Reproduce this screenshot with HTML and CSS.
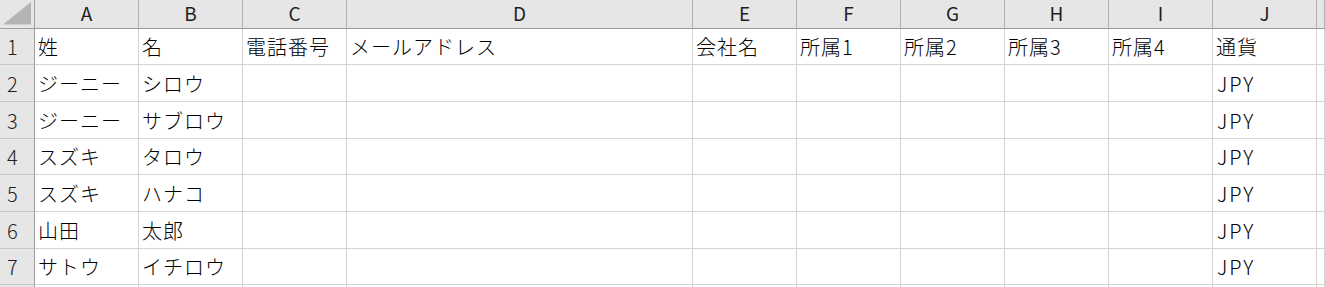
FILE: index.html
```html
<!DOCTYPE html>
<html lang="ja">
<head>
<meta charset="utf-8">
<title>Sheet</title>
<link rel="stylesheet" href="styles.css">
</head>
<body>
<div class="sheet">
  <div class="corner"><svg width="34" height="28" viewBox="0 0 34 28"><polygon points="3,24.5 31,24.5 31,2" fill="#b4b4b4"/></svg></div>
  <div class="ch">A</div><div class="ch">B</div><div class="ch">C</div><div class="ch">D</div><div class="ch">E</div><div class="ch">F</div><div class="ch">G</div><div class="ch">H</div><div class="ch">I</div><div class="ch">J</div><div class="ch"></div>

  <div class="rh">1</div><div class="c">姓</div><div class="c">名</div><div class="c">電話番号</div><div class="c">メールアドレス</div><div class="c">会社名</div><div class="c">所属1</div><div class="c">所属2</div><div class="c">所属3</div><div class="c">所属4</div><div class="c">通貨</div><div class="c"></div>

  <div class="rh">2</div><div class="c">ジーニー</div><div class="c">シロウ</div><div class="c"></div><div class="c"></div><div class="c"></div><div class="c"></div><div class="c"></div><div class="c"></div><div class="c"></div><div class="c lat">JPY</div><div class="c"></div>

  <div class="rh">3</div><div class="c">ジーニー</div><div class="c">サブロウ</div><div class="c"></div><div class="c"></div><div class="c"></div><div class="c"></div><div class="c"></div><div class="c"></div><div class="c"></div><div class="c lat">JPY</div><div class="c"></div>

  <div class="rh">4</div><div class="c">スズキ</div><div class="c">タロウ</div><div class="c"></div><div class="c"></div><div class="c"></div><div class="c"></div><div class="c"></div><div class="c"></div><div class="c"></div><div class="c lat">JPY</div><div class="c"></div>

  <div class="rh">5</div><div class="c">スズキ</div><div class="c">ハナコ</div><div class="c"></div><div class="c"></div><div class="c"></div><div class="c"></div><div class="c"></div><div class="c"></div><div class="c"></div><div class="c lat">JPY</div><div class="c"></div>

  <div class="rh">6</div><div class="c">山田</div><div class="c">太郎</div><div class="c"></div><div class="c"></div><div class="c"></div><div class="c"></div><div class="c"></div><div class="c"></div><div class="c"></div><div class="c lat">JPY</div><div class="c"></div>

  <div class="rh">7</div><div class="c">サトウ</div><div class="c">イチロウ</div><div class="c"></div><div class="c"></div><div class="c"></div><div class="c"></div><div class="c"></div><div class="c"></div><div class="c"></div><div class="c lat">JPY</div><div class="c"></div>

  <div class="rh"></div><div class="c"></div><div class="c"></div><div class="c"></div><div class="c"></div><div class="c"></div><div class="c"></div><div class="c"></div><div class="c"></div><div class="c"></div><div class="c"></div><div class="c"></div>
</div>
</body>
</html>
```

FILE: styles.css
```css
html, body {
  margin: 0;
  padding: 0;
  background: #ffffff;
  overflow: hidden;
}

.sheet {
  display: grid;
  grid-template-columns: 35px 104px 104px 104px 346px 104px 104px 104px 104px 104px 104px 8px;
  grid-template-rows: 29px 36px 37px 37px 36px 37px 37px 36px 3px;
  font-family: "Noto Sans CJK JP", "Noto Sans", sans-serif;
  font-size: 20px;
  font-weight: 300;
  color: #000000;
  width: 1325px;
  height: 287px;
  overflow: hidden;
}

.sheet > div {
  box-sizing: border-box;
  overflow: hidden;
  white-space: nowrap;
}

.corner {
  background: #e6e6e6;
  border-right: 1px solid #9e9e9e;
  border-bottom: 1px solid #9e9e9e;
}

.corner svg {
  display: block;
}

.ch {
  background: #e6e6e6;
  border-right: 1px solid #b1b1b1;
  border-bottom: 1px solid #9b9b9b;
  text-align: center;
  font-size: 19px;
  font-weight: 400;
  line-height: 26px;
  color: #1f1f1f;
}

.rh {
  background: #e6e6e6;
  border-right: 1px solid #9e9e9e;
  border-bottom: 1px solid #c8c8c8;
  padding-left: 7px;
  display: flex;
  align-items: center;
  color: #1f1f1f;
}

.c {
  border-right: 1px solid #d4d4d4;
  border-bottom: 1px solid #d4d4d4;
  padding-left: 3px;
  display: flex;
  align-items: center;
  letter-spacing: 1px;
}

.lat {
  padding-left: 4px;
  letter-spacing: 2px;
}
```
